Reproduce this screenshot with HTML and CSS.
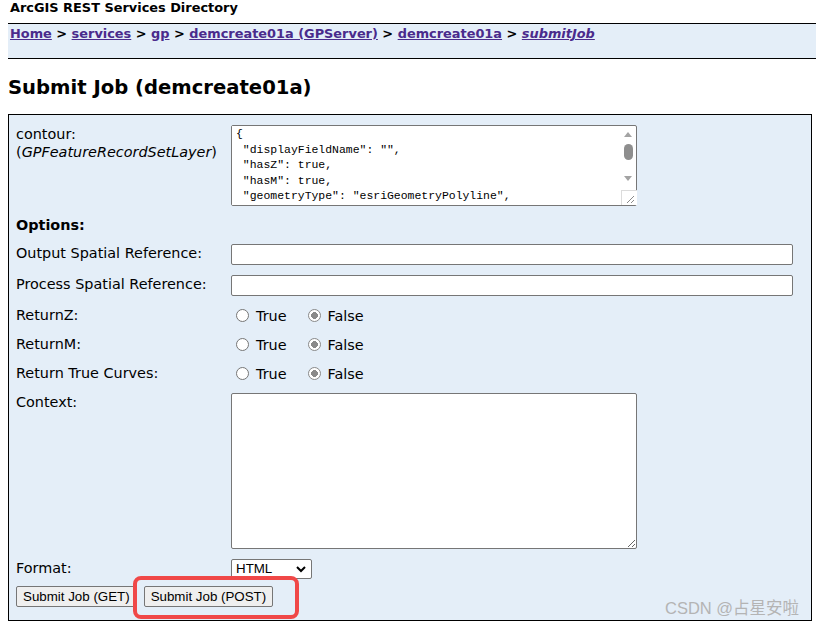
FILE: index.html
```html
<!DOCTYPE html>
<html>
<head>
<meta charset="utf-8">
<title>Submit Job (demcreate01a)</title>
<link rel="stylesheet" href="styles.css">
</head>
<body>
<div class="title">ArcGIS REST Services Directory</div>
<div class="nav">
  <a href="#">Home</a> &gt; <a href="#">services</a> &gt; <a href="#">gp</a> &gt; <a href="#">demcreate01a (GPServer)</a> &gt; <a href="#">demcreate01a</a> &gt; <a href="#"><i>submitJob</i></a>
</div>
<h2 class="heading">Submit Job (demcreate01a)</h2>
<form class="box">
  <div class="row">
    <div class="label">contour:<br>(<i>GPFeatureRecordSetLayer</i>)</div>
    <div class="field">
      <div class="ta-wrap">
        <textarea class="ta-json" spellcheck="false">{
 "displayFieldName": "",
 "hasZ": true,
 "hasM": true,
 "geometryType": "esriGeometryPolyline",
 "spatialReference": {
  "wkid": 4326
 },
 "fields": []
}</textarea>
        <div class="sb">
          <svg class="sb-arrow" width="16" height="14" viewBox="0 0 16 14"><path d="M4 10 L8 5 L12 10 Z" fill="#a3a3a3"/></svg>
          <div class="sb-track"><div class="sb-thumb"></div></div>
          <svg class="sb-arrow" width="16" height="14" viewBox="0 0 16 14"><path d="M4 4 L8 9 L12 4 Z" fill="#a3a3a3"/></svg>
          <div class="sb-grip">
            <svg width="14" height="14" viewBox="0 0 14 14"><path d="M12 5 L5 12 M12 9 L9 12" stroke="#8a8a8a" stroke-width="1"/></svg>
          </div>
        </div>
      </div>
    </div>
  </div>
  <div class="row">
    <div class="label bold">Options:</div>
    <div class="field"></div>
  </div>
  <div class="row">
    <div class="label">Output Spatial Reference:</div>
    <div class="field"><input class="text" type="text"></div>
  </div>
  <div class="row">
    <div class="label">Process Spatial Reference:</div>
    <div class="field"><input class="text" type="text"></div>
  </div>
  <div class="row row-radio">
    <div class="label">ReturnZ:</div>
    <div class="field radios">
      <label class="opt"><input type="radio" name="z"> True</label>
      <label class="opt"><input type="radio" name="z" checked> False</label>
    </div>
  </div>
  <div class="row row-radio">
    <div class="label">ReturnM:</div>
    <div class="field radios">
      <label class="opt"><input type="radio" name="m"> True</label>
      <label class="opt"><input type="radio" name="m" checked> False</label>
    </div>
  </div>
  <div class="row row-radio">
    <div class="label">Return True Curves:</div>
    <div class="field radios">
      <label class="opt"><input type="radio" name="c"> True</label>
      <label class="opt"><input type="radio" name="c" checked> False</label>
    </div>
  </div>
  <div class="row">
    <div class="label">Context:</div>
    <div class="field"><textarea class="ta-context"></textarea></div>
  </div>
  <div class="row">
    <div class="label">Format:</div>
    <div class="field">
      <div class="select"><span>HTML</span>
        <svg width="12" height="10" viewBox="0 0 12 10"><path d="M2 3 L6 7 L10 3" fill="none" stroke="#000" stroke-width="2"/></svg>
      </div>
    </div>
  </div>
  <div class="row-buttons">
    <button type="button" class="btn">Submit Job (GET)</button>
    <button type="button" class="btn btn-post">Submit Job (POST)</button>
  </div>
</form>
<div class="annot"></div>
<div class="watermark">CSDN @占星安啦</div>
</body>
</html>
```

FILE: styles.css
```css
html, body {
  background: #fff;
}
body {
  margin: 0 0 0 8px;
  font-family: "DejaVu Sans", Verdana, sans-serif;
  color: #000;
  overflow: hidden;
}
.title {
  font-size: 12.9px;
  font-weight: bold;
  line-height: 16px;
  padding-left: 2px;
  margin-bottom: 7px;
}
.nav {
  background: #e4eef8;
  border-top: 1px solid #000;
  border-bottom: 1px solid #000;
  padding: 1px 2px 15px;
  font-size: 12.9px;
  font-weight: bold;
  line-height: 18px;
}
.nav a {
  color: #4a2b8c;
  text-decoration: underline;
}
.heading {
  margin: 17px 0 15px;
  font-size: 19.6px;
  line-height: 23px;
  font-weight: bold;
}
.box {
  box-sizing: border-box;
  width: 804px;
  height: 507px;
  background: #e4eef8;
  border: 1px solid #000;
  padding: 5px 7px 0;
  margin: 0;
  font-size: 14.4px;
  line-height: 18px;
}
.row {
  display: grid;
  grid-template-columns: 215px 1fr;
  padding: 5px 0;
}
.row-radio .field,
.row-radio .label {
  height: 19px;
}
.bold {
  font-weight: bold;
}
.field {
  display: flex;
  align-items: flex-start;
}
.ta-wrap {
  box-sizing: border-box;
  width: 406px;
  height: 81px;
  display: flex;
  background: #fff;
  border: 1px solid #767676;
  border-radius: 2px;
}
.ta-json {
  flex: 1;
  border: 0;
  outline: none;
  resize: none;
  overflow: hidden;
  margin: 0;
  padding: 0 0 0 4px;
  font-family: "Liberation Mono", "DejaVu Sans Mono", monospace;
  font-size: 11.45px;
  line-height: 15.6px;
  color: #000;
  background: #fff;
  white-space: pre;
}
.sb {
  width: 16px;
  display: flex;
  flex-direction: column;
  align-items: center;
  padding-top: 1px;
}
.sb-arrow {
  display: block;
}
.sb-track {
  flex: 1;
  width: 16px;
  display: flex;
  justify-content: center;
  padding-top: 3px;
}
.sb-thumb {
  width: 9px;
  height: 16px;
  border-radius: 5px;
  background: #8e8e8e;
}
.sb-grip {
  width: 15px;
  height: 14px;
  background: #fff;
  border-top: 1px solid #dcdcdc;
  border-left: 1px solid #dcdcdc;
  margin-left: 1px;
  margin-top: 4px;
}
.sb-grip svg {
  display: block;
}
.text {
  box-sizing: border-box;
  width: 562px;
  height: 21px;
  margin: 0;
  border: 1px solid #767676;
  border-radius: 2px;
  background: #fff;
  padding: 1px 2px;
}
.radios {
  align-items: center;
}
.opt {
  display: inline-flex;
  align-items: center;
  gap: 7px;
  margin-right: 16px;
}
.opt input {
  -webkit-appearance: none;
  appearance: none;
  box-sizing: border-box;
  width: 13px;
  height: 13px;
  margin: 0 0 0 5px;
  border: 1px solid #767676;
  border-radius: 50%;
  background: #fff;
}
.opt input:checked {
  border-color: #8a8a8a;
  background: radial-gradient(circle, #8a8a8a 0 3.2px, #fff 3.6px);
}
.ta-context {
  box-sizing: border-box;
  width: 406px;
  height: 156px;
  margin: 0;
  border: 1px solid #767676;
  border-radius: 2px;
  background: #fff;
  resize: both;
}
.select {
  box-sizing: border-box;
  width: 81px;
  height: 20px;
  display: flex;
  align-items: center;
  justify-content: space-between;
  border: 1px solid #767676;
  border-radius: 2px;
  background: #fff;
  padding: 0 4px 0 4px;
  font-family: "Liberation Sans", Arial, sans-serif;
  font-size: 13.33px;
}
.select svg {
  display: block;
}
.row-buttons {
  display: flex;
  align-items: center;
  padding-top: 2px;
}
.btn {
  box-sizing: border-box;
  height: 21px;
  margin: 0;
  padding: 1px 6px;
  font-family: "Liberation Sans", Arial, sans-serif;
  font-size: 13.33px;
  color: #000;
  background: #efefef;
  border: 1px solid #767676;
  border-radius: 2px;
}
.btn-post {
  margin-left: 7px;
}
.annot {
  position: absolute;
  left: 133px;
  top: 576px;
  width: 166px;
  height: 43px;
  box-sizing: border-box;
  border: 4px solid #f04848;
  border-radius: 8px;
}
.watermark {
  position: absolute;
  left: 665px;
  top: 598px;
  font-family: "Liberation Sans", "Noto Sans CJK SC", sans-serif;
  font-size: 16.5px;
  line-height: 20px;
  color: #b4b4b4;
}
```
